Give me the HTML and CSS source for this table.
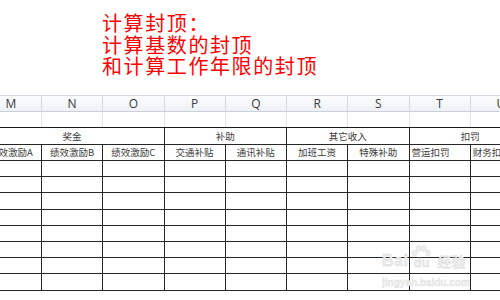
FILE: index.html
```html
<!DOCTYPE html>
<html lang="zh">
<head>
<meta charset="utf-8">
<link rel="stylesheet" href="styles.css">
</head>
<body>
<div class="page">
  <div class="title">
    <div>计算封顶：</div>
    <div>计算基数的封顶</div>
    <div>和计算工作年限的封顶</div>
  </div>
  <div class="sheet">
    <div class="colheads">
      <div>M</div><div>N</div><div>O</div><div>P</div><div>Q</div><div>R</div><div>S</div><div>T</div><div>U</div>
    </div>
    <div class="blank">
      <div></div><div></div><div></div><div></div><div></div><div></div><div></div><div></div><div></div>
    </div>
    <div class="grid">
      <div class="g span3">奖金</div>
      <div class="g span2">补助</div>
      <div class="g span2">其它收入</div>
      <div class="g span2">扣罚</div>
      <div class="s">绩效激励A</div>
      <div class="s">绩效激励B</div>
      <div class="s">绩效激励C</div>
      <div class="s">交通补贴</div>
      <div class="s">通讯补贴</div>
      <div class="s">加班工资</div>
      <div class="s">特殊补助</div>
      <div class="s left">营运扣罚</div>
      <div class="s left">财务扣罚</div>
      <div></div><div></div><div></div><div></div><div></div><div></div><div></div><div></div><div></div>
      <div></div><div></div><div></div><div></div><div></div><div></div><div></div><div></div><div></div>
      <div></div><div></div><div></div><div></div><div></div><div></div><div></div><div></div><div></div>
      <div></div><div></div><div></div><div></div><div></div><div></div><div></div><div></div><div></div>
      <div></div><div></div><div></div><div></div><div></div><div></div><div></div><div></div><div></div>
      <div></div><div></div><div></div><div></div><div></div><div></div><div></div><div></div><div></div>
      <div></div><div></div><div></div><div></div><div></div><div></div><div></div><div></div><div></div>
      <div></div><div></div><div></div><div></div><div></div><div></div><div></div><div></div><div></div>
    </div>
  </div>
  <div class="watermark">
    <div class="wm-logo">
      <span class="wm-bai">Bai</span>
      <span class="wm-du">
        <svg class="paw" width="20" height="14" viewBox="0 0 20 14">
          <ellipse cx="3.5" cy="8" rx="2.4" ry="3" />
          <ellipse cx="7.8" cy="3.5" rx="2.4" ry="3" />
          <ellipse cx="12.8" cy="3.5" rx="2.4" ry="3" />
          <ellipse cx="17" cy="8" rx="2.4" ry="3" />
        </svg>
        <span class="du">du</span>
      </span>
      <span class="wm-jy">经验</span>
    </div>
    <div class="wm-url">jingyan.baidu.com</div>
  </div>
</div>
</body>
</html>
```

FILE: styles.css
```css
html, body {
  margin: 0;
  padding: 0;
  background: #fff;
}
.page {
  position: relative;
  width: 500px;
  height: 300px;
  overflow: hidden;
  font-family: "Noto Sans CJK SC", "Noto Sans", sans-serif;
}
.title {
  padding: 12px 0 0 102px;
  height: 95px;
  box-sizing: border-box;
  color: #ff0000;
  font-size: 20px;
  line-height: 21.5px;
  font-weight: 400;
  letter-spacing: 1.6px;
}
.sheet {
  margin-left: -19.25px;
  width: 551.25px;
}
.colheads {
  display: grid;
  grid-template-columns: repeat(9, 61.25px);
  height: 17px;
  box-sizing: border-box;
  border-top: 1px solid #d5dbe3;
  border-bottom: 1px solid #c9d0da;
  background: linear-gradient(#fbfcfd, #eef1f5);
}
.colheads div {
  border-right: 1px solid #d2d8e1;
  text-align: center;
  font-family: "Open Sans", "Liberation Sans", sans-serif;
  font-size: 12px;
  line-height: 15px;
  color: #3a3a3a;
}
.blank {
  display: grid;
  grid-template-columns: repeat(9, 61.25px);
  height: 15px;
}
.blank div {
  border-right: 1px solid #e2e4e8;
}
.grid {
  display: grid;
  grid-template-columns: repeat(9, 61.25px);
  grid-template-rows: 17px 16px 16px 16px 17px 16px 16px 16px 16px 17px 16px;
  border-top: 1px solid #1a1a1a;
}
.grid div {
  box-sizing: border-box;
  border-right: 1px solid #262626;
  border-bottom: 1px solid #262626;
  font-size: 9.5px;
  line-height: 15px;
  color: #3c3c3c;
  text-align: center;
  white-space: nowrap;
  overflow: hidden;
}
.grid .span3 { grid-column: span 3; }
.grid .span2 { grid-column: span 2; }
.grid .g { line-height: 16px; }
.grid .left { text-align: left; padding-left: 2px; }

.watermark {
  position: absolute;
  left: 382px;
  top: 244px;
  color: #ececec;
  font-family: "Liberation Sans", "Noto Sans CJK SC", sans-serif;
}
.wm-logo {
  display: flex;
  align-items: flex-end;
  height: 25px;
}
.wm-bai {
  font-size: 16px;
  font-weight: 700;
  line-height: 16px;
  letter-spacing: 0.5px;
  -webkit-text-stroke: 0.4px #dadada;
}
.wm-du {
  display: flex;
  flex-direction: column;
  align-items: center;
  width: 24px;
  margin-left: 1px;
}
.paw {
  fill: #eeeeee;
  stroke: #dcdcdc;
  stroke-width: 0.6;
  margin-bottom: -3px;
}
.du {
  font-size: 13px;
  font-weight: 700;
  line-height: 13px;
  -webkit-text-stroke: 0.4px #dadada;
}
.wm-jy {
  margin-left: 4px;
  font-family: "Noto Sans CJK SC", sans-serif;
  font-size: 14px;
  line-height: 15px;
  font-weight: 700;
  -webkit-text-stroke: 0.3px #dadada;
}
.wm-url {
  margin-top: 8px;
  font-size: 10px;
  line-height: 11px;
  font-weight: 700;
  color: #ededed;
  -webkit-text-stroke: 0.3px #dcdcdc;
}
```
